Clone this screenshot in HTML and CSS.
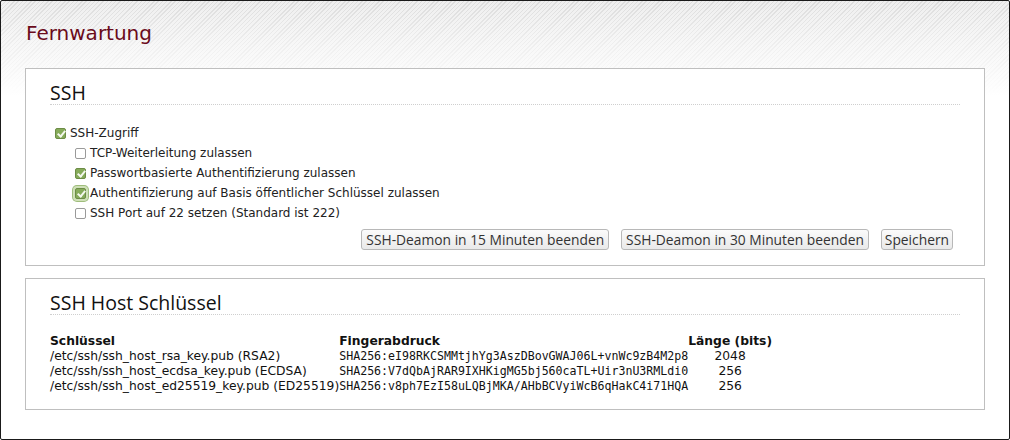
FILE: index.html
```html
<!DOCTYPE html>
<html lang="de">
<head>
<meta charset="utf-8">
<title>Fernwartung</title>
<link rel="stylesheet" href="styles.css">
</head>
<body>
<div class="page">
  <h1 class="title">Fernwartung</h1>

  <section class="box">
    <h2 class="box-title">SSH</h2>
    <ul class="opts">
      <li class="opt"><span class="cb checked"></span>SSH-Zugriff</li>
      <li class="opt sub"><span class="cb"></span>TCP-Weiterleitung zulassen</li>
      <li class="opt sub"><span class="cb checked"></span>Passwortbasierte Authentifizierung zulassen</li>
      <li class="opt sub"><span class="cb checked focus"></span>Authentifizierung auf Basis öffentlicher Schlüssel zulassen</li>
      <li class="opt sub"><span class="cb"></span>SSH Port auf 22 setzen (Standard ist 222)</li>
    </ul>
    <div class="actions">
      <button class="btn">SSH-Deamon in 15 Minuten beenden</button>
      <button class="btn">SSH-Deamon in 30 Minuten beenden</button>
      <button class="btn">Speichern</button>
    </div>
  </section>

  <section class="box">
    <h2 class="box-title">SSH Host Schlüssel</h2>
    <table class="keys">
      <thead>
        <tr><th>Schlüssel</th><th>Fingerabdruck</th><th>Länge (bits)</th></tr>
      </thead>
      <tbody>
        <tr><td>/etc/ssh/ssh_host_rsa_key.pub (RSA2)</td><td class="fp">SHA256:eI98RKCSMMtjhYg3AszDBovGWAJ06L+vnWc9zB4M2p8</td><td class="len">2048</td></tr>
        <tr><td>/etc/ssh/ssh_host_ecdsa_key.pub (ECDSA)</td><td class="fp">SHA256:V7dQbAjRAR9IXHKigMG5bj560caTL+Uir3nU3RMLdi0</td><td class="len">256</td></tr>
        <tr><td>/etc/ssh/ssh_host_ed25519_key.pub (ED25519)</td><td class="fp">SHA256:v8ph7EzI58uLQBjMKA/AHbBCVyiWcB6qHakC4i71HQA</td><td class="len">256</td></tr>
      </tbody>
    </table>
  </section>
</div>
</body>
</html>
```

FILE: styles.css
```css
html, body {
  margin: 0;
  padding: 0;
}

body {
  font-family: "DejaVu Sans", Verdana, sans-serif;
  font-size: 12px;
  color: #1e1e1e;
  background: #fff;
}

.page {
  box-sizing: border-box;
  width: 1010px;
  height: 440px;
  border: 1px solid #1a1a1a;
  border-radius: 2px;
  padding: 20px 24px 0 24px;
  background:
    linear-gradient(to bottom, rgba(255,255,255,0) 0px, rgba(255,255,255,0.55) 45px, #fff 95px),
    repeating-linear-gradient(135deg, #dcdcdc 0px, #dcdcdc 1px, #efefef 1px, #efefef 3px);
  background-color: #fff;
}

.title {
  margin: 0 0 23px 1px;
  font-family: "DejaVu Sans", sans-serif;
  font-weight: normal;
  font-size: 20px;
  line-height: 24px;
  color: #6a0b1b;
}

.box {
  border: 1px solid #bfbfbf;
  background: #fff;
  padding: 12px 24px 15px 24px;
  margin-bottom: 12px;
}

.box-title {
  margin: 0;
  font-family: "Open Sans", sans-serif;
  font-weight: normal;
  font-size: 19.5px;
  line-height: 23px;
  color: #111;
  border-bottom: 1px dotted #cfcfcf;
}

.opts {
  list-style: none;
  margin: 18px 0 0 0;
  padding: 0;
}

.opt {
  display: flex;
  align-items: center;
  gap: 4px;
  height: 20px;
  line-height: 20px;
  padding-left: 5px;
  color: #222;
}

.opt.sub {
  padding-left: 25px;
}

.cb {
  position: relative;
  box-sizing: border-box;
  width: 11px;
  height: 11px;
  border: 1px solid #9a9a9a;
  border-radius: 2px;
  background: #fff;
  flex: none;
}

.cb.checked {
  border-color: #6c8c46;
  background: #86ab5a;
}

.cb.checked::after {
  content: "";
  position: absolute;
  left: 3px;
  top: 0px;
  width: 3px;
  height: 6px;
  border: solid #f4f8ee;
  border-width: 0 2px 2px 0;
  transform: rotate(40deg);
}

.cb.focus {
  box-shadow: 0 0 0 2px #cfe0b8, 0 0 0 3px #9fbd7c;
}

.actions {
  display: flex;
  justify-content: flex-end;
  gap: 12px;
  margin-top: 6px;
  padding-right: 7px;
}

.btn {
  height: 21px;
  padding: 0 4px;
  font-family: "Open Sans", sans-serif;
  font-size: 13.8px;
  color: #333;
  border: 1px solid #b8b8b8;
  border-radius: 3px;
  background: linear-gradient(to bottom, #fbfbfb, #e9e9e9);
  line-height: 19px;
}

.btn:last-child {
  padding: 0 3px;
}

.keys {
  margin-top: 19px;
  border-collapse: collapse;
  border-spacing: 0;
  font-size: 12.3px;
  color: #111;
}

.keys th,
.keys td {
  padding: 0;
  line-height: 15px;
  text-align: left;
  white-space: nowrap;
  vertical-align: baseline;
}

.keys th {
  font-weight: bold;
}

.keys td.fp {
  font-family: "DejaVu Sans Mono", monospace;
  font-size: 11.6px;
}

.keys td.len {
  text-align: center;
}
```
